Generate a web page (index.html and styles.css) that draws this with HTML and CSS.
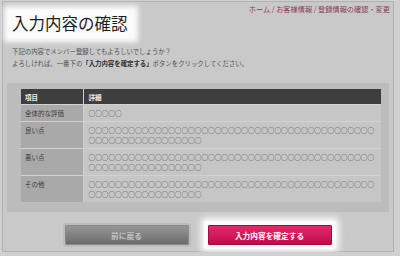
FILE: index.html
```html
<!DOCTYPE html>
<html lang="ja">
<head>
  <meta charset="UTF-8" />
  <title>入力内容の確認</title>
  <link rel="stylesheet" href="styles.css">
</head>
<body>

  <div class="frame">

    <div class="top">
      <h1 class="title">入力内容の確認</h1>
      <div class="crumbs">ホーム / お客様情報 / 登録情報の確認・変更</div>
    </div>

    <p class="intro">
      下記の内容でメンバー登録してもよろしいでしょうか？<br>
      よろしければ、一番下の<b>「入力内容を確定する」</b>ボタンをクリックしてください。
    </p>

    <!-- 確認テーブル -->
    <div class="panel">
      <table class="review">
        <tr>
          <th class="label">項目</th>
          <th>詳細</th>
        </tr>
        <tr>
          <td class="label">全体的な評価</td>
          <td class="marks">○○○○○</td>
        </tr>
        <tr>
          <td class="label">良い点</td>
          <td class="marks">○○○○○○○○○○○○○○○○○○○○○○○○○○○○○○○○○○○○○○○○○○○○○○○○○○○○○○○○○○○○</td>
        </tr>
        <tr>
          <td class="label">悪い点</td>
          <td class="marks">○○○○○○○○○○○○○○○○○○○○○○○○○○○○○○○○○○○○○○○○○○○○○○○○○○○○○○○○○○○○</td>
        </tr>
        <tr>
          <td class="label">その他</td>
          <td class="marks">○○○○○○○○○○○○○○○○○○○○○○○○○○○○○○○○○○○○○○○○○○○○○○○○○○○○○○○○○○○○</td>
        </tr>
      </table>
    </div>

    <div class="actions">
      <button class="btn btn-back">前に戻る</button>
      <button class="btn btn-submit">入力内容を確定する</button>
    </div>

  </div>

</body>
</html>
```

FILE: styles.css
```css
* {
  box-sizing: border-box;
}

body {
  margin: 0;
  background: #d0d0d0;
  font-family: "Noto Sans CJK JP", "Noto Sans", sans-serif;
  color: #4a4a4a;
}

.frame {
  height: 251px;
  margin: 1px 6px 0 2px;
  background: #c9c9c9;
  border: 1px solid #b2b2b2;
}

.top {
  display: flex;
  justify-content: space-between;
  align-items: flex-start;
  padding: 0 3px 0 5px;
}

.title {
  margin: 8px 0 0;
  padding: 1px 6px 3px 4px;
  font-size: 16.5px;
  font-weight: 400;
  line-height: 24px;
  color: #1e1e1e;
  background: #fbfbfb;
  box-shadow: 0 0 5px 4px #fbfbfb;
}

.crumbs {
  margin-top: 3px;
  font-size: 7.2px;
  line-height: 9px;
  color: #8e3a58;
}

.intro {
  margin: 8px 0 0 9px;
  font-size: 6.4px;
  line-height: 12px;
  color: #505050;
}

.intro b {
  color: #303030;
}

.panel {
  margin: 13px 4px 0 4px;
  padding: 6px 8px 10px 14px;
  background: #bcbcbc;
}

.review {
  width: 100%;
  border-collapse: collapse;
  font-size: 6.5px;
  line-height: 10px;
}

.review th {
  background: #3e3e3e;
  color: #f0f0f0;
  text-align: left;
  padding: 3px 5px 2px;
  border-right: 1px solid #9a9a9a;
}

.review th:last-child {
  border-right: none;
}

.review td {
  padding: 3px 5px;
  vertical-align: top;
  border-top: 1px solid #d2d2d2;
  background: #c6c6c6;
  color: #3c3c3c;
}

.review .label {
  width: 62px;
  background: #a9a9a9;
  border-right: 1px solid #cfcfcf;
  padding-left: 4px;
}

.review th.label {
  background: #3e3e3e;
}

.marks {
  font-size: 6.65px;
  color: #7c7c7c;
  word-break: break-all;
}

.actions {
  display: flex;
  justify-content: center;
  gap: 19px;
  margin-top: 13px;
}

.btn {
  width: 124px;
  height: 20px;
  padding: 0;
  font-family: inherit;
  font-size: 7.7px;
  font-weight: bold;
  border-radius: 1px;
}

.btn-back {
  color: #c4c4c4;
  background: linear-gradient(#979797, #6c6c6c);
  border: 1px solid #8a8a8a;
  box-shadow: 0 0 0 2px #bdbdbd;
}

.btn-submit {
  color: #fff;
  background: linear-gradient(#e02c6c, #c20a4a);
  border: 1px solid #a00a3c;
  box-shadow: 0 0 0 4px #fbfbfb, 0 0 6px 7px #fbfbfb;
}
```
